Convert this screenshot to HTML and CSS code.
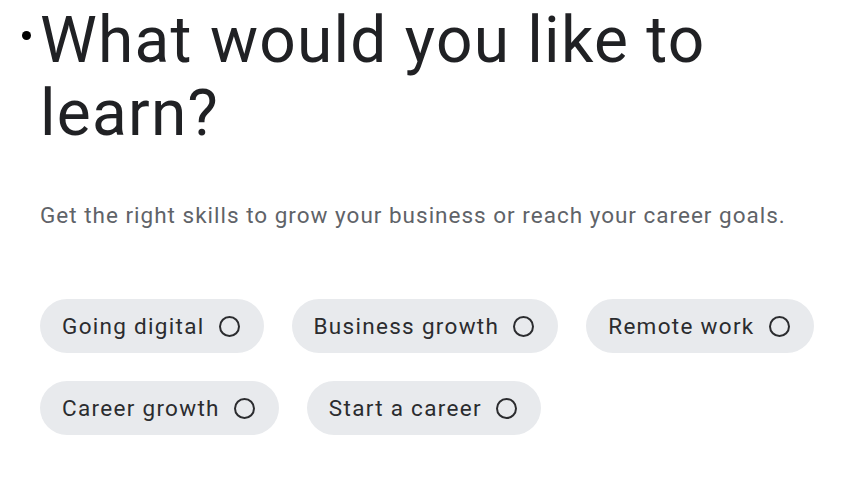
FILE: index.html
```html
<!DOCTYPE html>
<html lang="en">
<head>
<meta charset="utf-8">
<title>What would you like to learn?</title>
<link rel="stylesheet" href="styles.css">
</head>
<body>
<main class="page">
  <h1 class="title">What would you like to learn?</h1>
  <p class="subtitle">Get the right skills to grow your business or reach your career goals.</p>
  <div class="chips">
    <button class="chip">Going digital <span class="ring"></span></button>
    <button class="chip">Business growth <span class="ring"></span></button>
    <button class="chip">Remote work <span class="ring"></span></button>
    <button class="chip">Career growth <span class="ring"></span></button>
    <button class="chip">Start a career <span class="ring"></span></button>
  </div>
</main>
</body>
</html>
```

FILE: styles.css
```css
html, body {
  margin: 0;
  padding: 0;
  background: #ffffff;
}

body {
  font-family: Roboto, "Noto Sans", sans-serif;
  color: #202124;
}

.page {
  padding: 0 30px 0 40px;
}

.title {
  position: relative;
  margin: 0;
  padding-top: 4px;
  font-size: 64px;
  line-height: 73px;
  font-weight: 400;
  letter-spacing: 1.25px;
  color: #202124;
  max-width: 720px;
}

.title::before {
  content: "";
  position: absolute;
  left: -18px;
  top: 31px;
  width: 9px;
  height: 9px;
  border-radius: 50%;
  background: #000;
}

.subtitle {
  margin: 50px 0 0;
  font-size: 22.5px;
  line-height: 30px;
  letter-spacing: 1px;
  color: #5f6368;
}

.chips {
  display: flex;
  flex-wrap: wrap;
  gap: 28px;
  margin-top: 69px;
}

.chip {
  display: inline-flex;
  align-items: center;
  gap: 14px;
  height: 54px;
  padding: 0 24px 0 22px;
  border: 0;
  border-radius: 27px;
  background: #e8eaed;
  font-family: inherit;
  font-size: 22.5px;
  letter-spacing: 1.3px;
  color: #2b2c2f;
}

.ring {
  width: 17px;
  height: 17px;
  border: 2px solid #2b2c2f;
  border-radius: 50%;
}
```
